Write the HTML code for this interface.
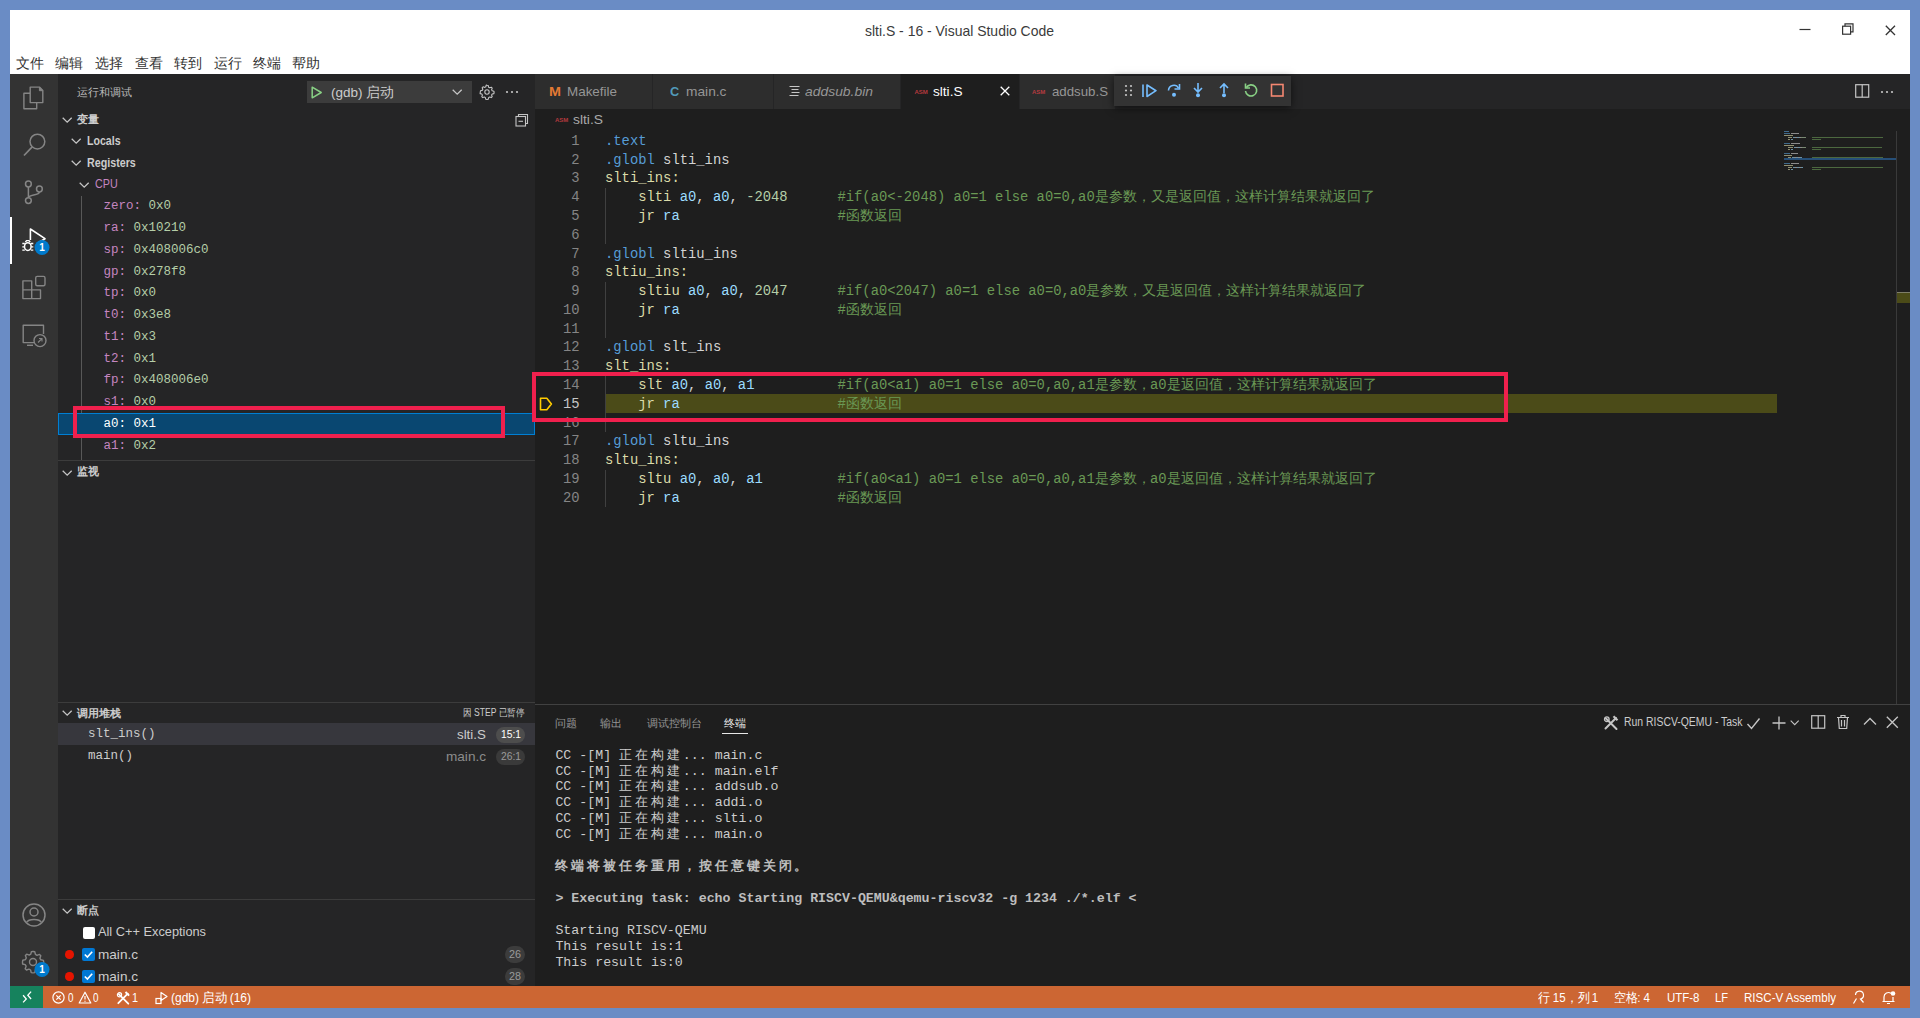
<!DOCTYPE html>
<html><head><meta charset="utf-8">
<style>
*{margin:0;padding:0;box-sizing:border-box}
html,body{width:1920px;height:1018px;overflow:hidden}
body{background:#6a8cc5;position:relative;font-family:"Liberation Sans",sans-serif}
.abs{position:absolute}
.t{position:absolute;white-space:pre;line-height:1;transform-origin:0 0}
svg{position:absolute;overflow:visible}
</style></head><body>

<div class="abs" style="left:10px;top:10px;width:1900px;height:64px;background:#ffffff;"></div>
<div class="abs" style="left:10px;top:74px;width:48px;height:912px;background:#333333;"></div>
<div class="abs" style="left:58px;top:74px;width:477px;height:912px;background:#252526;"></div>
<div class="abs" style="left:535px;top:74px;width:1375px;height:912px;background:#1e1e1e;"></div>
<div class="abs" style="left:535px;top:74px;width:1375px;height:35px;background:#252526;"></div>
<div class="abs" style="left:10px;top:986px;width:1900px;height:22px;background:#cc6633;"></div>
<div class="abs" style="left:10px;top:986px;width:33px;height:22px;background:#16825d;"></div>
<div class="t" style="transform:scaleX(0.9302);left:865.00px;top:22.85px;font-family:'Liberation Sans',sans-serif;font-size:15px;color:#3b3b3b;">slti.S - 16 - Visual Studio Code</div>
<div class="t" style="left:16.00px;top:55.60px;font-family:'Liberation Sans',sans-serif;font-size:14px;color:#333333;"><span style="display:inline-block;width:28.00px">文件</span></div>
<div class="t" style="left:55.00px;top:55.60px;font-family:'Liberation Sans',sans-serif;font-size:14px;color:#333333;"><span style="display:inline-block;width:28.00px">编辑</span></div>
<div class="t" style="left:95.00px;top:55.60px;font-family:'Liberation Sans',sans-serif;font-size:14px;color:#333333;"><span style="display:inline-block;width:28.00px">选择</span></div>
<div class="t" style="left:134.50px;top:55.60px;font-family:'Liberation Sans',sans-serif;font-size:14px;color:#333333;"><span style="display:inline-block;width:28.00px">查看</span></div>
<div class="t" style="left:174.00px;top:55.60px;font-family:'Liberation Sans',sans-serif;font-size:14px;color:#333333;"><span style="display:inline-block;width:28.00px">转到</span></div>
<div class="t" style="left:213.50px;top:55.60px;font-family:'Liberation Sans',sans-serif;font-size:14px;color:#333333;"><span style="display:inline-block;width:28.00px">运行</span></div>
<div class="t" style="left:252.50px;top:55.60px;font-family:'Liberation Sans',sans-serif;font-size:14px;color:#333333;"><span style="display:inline-block;width:28.00px">终端</span></div>
<div class="t" style="left:292.00px;top:55.60px;font-family:'Liberation Sans',sans-serif;font-size:14px;color:#333333;"><span style="display:inline-block;width:28.00px">帮助</span></div>
<svg style="left:1799px;top:24px;" width="14" height="12" viewBox="0 0 14 12"><line x1="0.5" y1="5.5" x2="11.5" y2="5.5" stroke="#333" stroke-width="1.2"/></svg>
<svg style="left:1842px;top:23px;" width="12" height="13" viewBox="0 0 12 13"><rect x="0.6" y="3.2" width="8" height="8" fill="none" stroke="#333" stroke-width="1.2"/><path d="M3 3.2V0.8h8v8H8.6" fill="none" stroke="#333" stroke-width="1.2"/></svg>
<svg style="left:1885px;top:25px;" width="11" height="11" viewBox="0 0 11 11"><path d="M0.8 0.8L10 10M10 0.8L0.8 10" stroke="#333" stroke-width="1.3"/></svg>
<svg style="left:22px;top:84px;" width="26" height="26" viewBox="0 0 26 26"><path d="M8.2 3.1h9.2l3.4 3.4v12.1H8.2z" fill="none" stroke="#858585" stroke-width="1.4" stroke-linejoin="round"/><path d="M17.4 3.1v3.6h3.4z" fill="#858585" stroke="#858585" stroke-width="1"/><path d="M8.2 9.2H1.9v15.5h12.8v-6.1" fill="none" stroke="#858585" stroke-width="1.4" stroke-linejoin="round"/></svg>
<svg style="left:22px;top:134px;" width="26" height="26" viewBox="0 0 26 26"><circle cx="15.4" cy="7.6" r="7.4" fill="none" stroke="#858585" stroke-width="1.5"/><path d="M10.2 12.8L2 21.5" stroke="#858585" stroke-width="1.7"/></svg>
<svg style="left:22px;top:180px;" width="26" height="26" viewBox="0 0 26 26"><circle cx="6.4" cy="4" r="2.9" fill="none" stroke="#858585" stroke-width="1.5"/><circle cx="6.4" cy="20.6" r="2.9" fill="none" stroke="#858585" stroke-width="1.5"/><circle cx="17.4" cy="9" r="2.9" fill="none" stroke="#858585" stroke-width="1.5"/><path d="M6.4 7v10.7 M17.4 12c0 3.5-11 2.5-11 5.7" fill="none" stroke="#858585" stroke-width="1.5"/></svg>
<div class="abs" style="left:10px;top:216.5px;width:2px;height:47.5px;background:#ffffff;"></div>
<svg style="left:20px;top:226px;" width="30" height="30" viewBox="0 0 30 30"><path d="M10.4 14V3L25 12.7L18 17" fill="none" stroke="#fff" stroke-width="1.6" stroke-linejoin="round"/><ellipse cx="7.8" cy="20.6" rx="3.3" ry="3.9" fill="none" stroke="#fff" stroke-width="1.5"/><path d="M2.3 17.5h2.5M2.3 20.8h2M2.3 24.2h2.5M10.8 17.5h2.5M11.3 20.8h2M10.8 24.2h2.5M5.3 16l1.3-1.3h2.4l1.3 1.3" stroke="#fff" stroke-width="1.3" fill="none"/></svg>
<svg style="left:34px;top:240px;" width="16" height="16" viewBox="0 0 16 16"><circle cx="8" cy="7.5" r="7.5" fill="#007acc"/><text x="8" y="11.3" font-family="Liberation Sans" font-size="10" font-weight="bold" fill="#fff" text-anchor="middle">1</text></svg>
<svg style="left:22px;top:276px;" width="26" height="26" viewBox="0 0 26 26"><path d="M0.9 4.9h8.8v9h8.8v8.7H0.9z M0.9 13.9h8.8v8.7" fill="none" stroke="#858585" stroke-width="1.4" stroke-linejoin="round"/><rect x="13.7" y="0.4" width="9.3" height="9.3" rx="1.5" fill="none" stroke="#858585" stroke-width="1.4"/></svg>
<svg style="left:22px;top:324px;" width="26" height="26" viewBox="0 0 26 26"><path d="M12 18.6H1.2V1.3h20.3v8.8" fill="none" stroke="#858585" stroke-width="1.4" stroke-linejoin="round"/><path d="M5 21.3h6" stroke="#858585" stroke-width="1.4"/><circle cx="18" cy="16.6" r="6" fill="none" stroke="#858585" stroke-width="1.4"/><path d="M16 18.5l4-4M17 14.5h3v3" fill="none" stroke="#858585" stroke-width="1.1"/></svg>
<svg style="left:21px;top:902px;" width="26" height="26" viewBox="0 0 26 26"><circle cx="13" cy="13" r="11" fill="none" stroke="#858585" stroke-width="1.5"/><circle cx="13" cy="10" r="4" fill="none" stroke="#858585" stroke-width="1.5"/><path d="M5.5 20.5c2-4 13-4 15 0" fill="none" stroke="#858585" stroke-width="1.5"/></svg>
<svg style="left:20px;top:949px;" width="26" height="26" viewBox="0 0 26 26"><path d="M13 2.5l1.8.3.6 2.6 1.6.9 2.5-.9 1.3 1.3-.9 2.5.9 1.6 2.6.6.3 1.8-.3 1.8-2.6.6-.9 1.6.9 2.5-1.3 1.3-2.5-.9-1.6.9-.6 2.6-1.8.3-1.8-.3-.6-2.6-1.6-.9-2.5.9-1.3-1.3.9-2.5-.9-1.6-2.6-.6L2.5 13l.3-1.8 2.6-.6.9-1.6-.9-2.5 1.3-1.3 2.5.9 1.6-.9.6-2.6z" fill="none" stroke="#858585" stroke-width="1.4" stroke-linejoin="round"/><circle cx="13" cy="13" r="3.5" fill="none" stroke="#858585" stroke-width="1.4"/></svg>
<svg style="left:34px;top:962px;" width="16" height="16" viewBox="0 0 16 16"><circle cx="8" cy="7.5" r="7.5" fill="#007acc"/><text x="8" y="11.3" font-family="Liberation Sans" font-size="10" font-weight="bold" fill="#fff" text-anchor="middle">1</text></svg>
<div class="t" style="left:77.20px;top:87.15px;font-family:'Liberation Sans',sans-serif;font-size:11px;color:#bbbbbb;"><span style="display:inline-block;width:55.00px">运行和调试</span></div>
<div class="abs" style="left:307px;top:81px;width:165px;height:21.5px;background:#3c3c3c;"></div>
<svg style="left:311px;top:86px;" width="12" height="13" viewBox="0 0 12 13"><path d="M1.2 1.2v10.6l9-5.3z" fill="none" stroke="#89d185" stroke-width="1.5" stroke-linejoin="round"/></svg>
<div class="t" style="left:331.00px;top:86.03px;font-family:'Liberation Sans',sans-serif;font-size:13.5px;color:#cccccc;">(gdb) <span style="display:inline-block;width:27.00px">启动</span></div>
<svg style="left:452px;top:88.5px;" width="11" height="7" viewBox="0 0 11 7"><path d="M0.7 0.7L5.2 5.2L9.7 0.7" fill="none" stroke="#c5c5c5" stroke-width="1.3"/></svg>
<svg style="left:479px;top:84px;" width="16" height="16" viewBox="0 0 16 16"><path d="M8 1.3l1.2.2.4 1.7 1 .6 1.7-.6.9.9-.6 1.7.6 1 1.7.4.2 1.2-.2 1.2-1.7.4-.6 1 .6 1.7-.9.9-1.7-.6-1 .6-.4 1.7-1.2.2-1.2-.2-.4-1.7-1-.6-1.7.6-.9-.9.6-1.7-.6-1-1.7-.4L1.3 8l.2-1.2 1.7-.4.6-1-.6-1.7.9-.9 1.7.6 1-.6.4-1.7z" fill="none" stroke="#c5c5c5" stroke-width="1.1" stroke-linejoin="round"/><circle cx="8" cy="8" r="2.2" fill="none" stroke="#c5c5c5" stroke-width="1.1"/></svg>
<svg style="left:505px;top:90px;" width="16" height="4" viewBox="0 0 16 4"><circle cx="2" cy="2" r="1.1" fill="#c5c5c5"/><circle cx="7" cy="2" r="1.1" fill="#c5c5c5"/><circle cx="12" cy="2" r="1.1" fill="#c5c5c5"/></svg>
<svg style="left:62px;top:116.5px;" width="11" height="7" viewBox="0 0 11 7"><path d="M0.7 0.7L5.2 5.2L9.7 0.7" fill="none" stroke="#c5c5c5" stroke-width="1.3"/></svg>
<div class="t" style="left:77.00px;top:114.45px;font-family:'Liberation Sans',sans-serif;font-size:11px;font-weight:bold;color:#cccccc;"><span style="display:inline-block;width:22.00px">变量</span></div>
<svg style="left:515px;top:113px;" width="14" height="14" viewBox="0 0 14 14"><path d="M3.5 3.5v-2h9v9h-2" fill="none" stroke="#c5c5c5" stroke-width="1.1"/><rect x="1" y="3.5" width="9.5" height="9.5" fill="none" stroke="#c5c5c5" stroke-width="1.1"/><path d="M3.5 8.3h4.5" stroke="#c5c5c5" stroke-width="1.1"/></svg>
<svg style="left:71px;top:138px;" width="11" height="7" viewBox="0 0 11 7"><path d="M0.7 0.7L5.2 5.2L9.7 0.7" fill="none" stroke="#c5c5c5" stroke-width="1.3"/></svg>
<div class="t" style="transform:scaleX(0.8158);left:87.40px;top:134.45px;font-family:'Liberation Sans',sans-serif;font-size:13px;font-weight:bold;color:#cccccc;">Locals</div>
<svg style="left:71px;top:159.8px;" width="11" height="7" viewBox="0 0 11 7"><path d="M0.7 0.7L5.2 5.2L9.7 0.7" fill="none" stroke="#c5c5c5" stroke-width="1.3"/></svg>
<div class="t" style="transform:scaleX(0.8236);left:87.40px;top:156.25px;font-family:'Liberation Sans',sans-serif;font-size:13px;font-weight:bold;color:#cccccc;">Registers</div>
<svg style="left:79px;top:181.5px;" width="11" height="7" viewBox="0 0 11 7"><path d="M0.7 0.7L5.2 5.2L9.7 0.7" fill="none" stroke="#c5c5c5" stroke-width="1.3"/></svg>
<div class="t" style="transform:scaleX(0.8269);left:95.30px;top:177.25px;font-family:'Liberation Sans',sans-serif;font-size:13px;color:#c586c0;">CPU</div>
<div class="abs" style="left:81px;top:196px;width:1px;height:264px;background:#585858;"></div>
<div class="abs" style="left:58px;top:413.3px;width:477px;height:21.4px;background:#094771;border:1px solid #007fd4"></div>
<div class="t" style="left:103.5px;top:200.24px;font-family:'Liberation Mono',monospace;font-size:12.5px;color:#c586c0">zero: <span style="color:#b5cea8">0x0</span></div>
<div class="t" style="left:103.5px;top:222.02px;font-family:'Liberation Mono',monospace;font-size:12.5px;color:#c586c0">ra: <span style="color:#b5cea8">0x10210</span></div>
<div class="t" style="left:103.5px;top:243.80px;font-family:'Liberation Mono',monospace;font-size:12.5px;color:#c586c0">sp: <span style="color:#b5cea8">0x408006c0</span></div>
<div class="t" style="left:103.5px;top:265.58px;font-family:'Liberation Mono',monospace;font-size:12.5px;color:#c586c0">gp: <span style="color:#b5cea8">0x278f8</span></div>
<div class="t" style="left:103.5px;top:287.36px;font-family:'Liberation Mono',monospace;font-size:12.5px;color:#c586c0">tp: <span style="color:#b5cea8">0x0</span></div>
<div class="t" style="left:103.5px;top:309.14px;font-family:'Liberation Mono',monospace;font-size:12.5px;color:#c586c0">t0: <span style="color:#b5cea8">0x3e8</span></div>
<div class="t" style="left:103.5px;top:330.92px;font-family:'Liberation Mono',monospace;font-size:12.5px;color:#c586c0">t1: <span style="color:#b5cea8">0x3</span></div>
<div class="t" style="left:103.5px;top:352.70px;font-family:'Liberation Mono',monospace;font-size:12.5px;color:#c586c0">t2: <span style="color:#b5cea8">0x1</span></div>
<div class="t" style="left:103.5px;top:374.48px;font-family:'Liberation Mono',monospace;font-size:12.5px;color:#c586c0">fp: <span style="color:#b5cea8">0x408006e0</span></div>
<div class="t" style="left:103.5px;top:396.26px;font-family:'Liberation Mono',monospace;font-size:12.5px;color:#c586c0">s1: <span style="color:#b5cea8">0x0</span></div>
<div class="t" style="left:103.5px;top:418.04px;font-family:'Liberation Mono',monospace;font-size:12.5px;color:#ffffff">a0: <span style="color:#ffffff">0x1</span></div>
<div class="t" style="left:103.5px;top:439.82px;font-family:'Liberation Mono',monospace;font-size:12.5px;color:#c586c0">a1: <span style="color:#b5cea8">0x2</span></div>
<div class="abs" style="left:58px;top:460px;width:477px;height:1px;background:#3c3c3c;"></div>
<svg style="left:62px;top:469.5px;" width="11" height="7" viewBox="0 0 11 7"><path d="M0.7 0.7L5.2 5.2L9.7 0.7" fill="none" stroke="#c5c5c5" stroke-width="1.3"/></svg>
<div class="t" style="left:77.00px;top:466.15px;font-family:'Liberation Sans',sans-serif;font-size:11px;font-weight:bold;color:#cccccc;"><span style="display:inline-block;width:22.00px">监视</span></div>
<div class="abs" style="left:58px;top:701.5px;width:477px;height:1px;background:#3c3c3c;"></div>
<svg style="left:62px;top:710px;" width="11" height="7" viewBox="0 0 11 7"><path d="M0.7 0.7L5.2 5.2L9.7 0.7" fill="none" stroke="#c5c5c5" stroke-width="1.3"/></svg>
<div class="t" style="left:77.00px;top:707.65px;font-family:'Liberation Sans',sans-serif;font-size:11px;font-weight:bold;color:#cccccc;"><span style="display:inline-block;width:44.00px">调用堆栈</span></div>
<div class="t" style="transform:scaleX(0.8573);left:462.50px;top:708.30px;font-family:'Liberation Sans',sans-serif;font-size:10px;color:#cccccc;"><span style="display:inline-block;width:10.00px">因</span> STEP <span style="display:inline-block;width:30.00px">已暂停</span></div>
<div class="abs" style="left:58px;top:723px;width:477px;height:22px;background:#37373d;"></div>
<div class="t" style="left:87.9px;top:728.30px;font-family:'Liberation Mono',monospace;font-size:12.5px;color:#cccccc">slt_ins()</div>
<div class="t" style="left:87.9px;top:750.30px;font-family:'Liberation Mono',monospace;font-size:12.5px;color:#cccccc">main()</div>
<div class="t" style="transform:scaleX(1.0223);left:456.50px;top:728.45px;font-family:'Liberation Sans',sans-serif;font-size:13px;color:#cccccc;">slti.S</div>
<div class="abs" style="left:496px;top:726.5px;width:28.5px;height:16px;background:#4d4d4d;border-radius:8px"></div>
<div class="t" style="transform:scaleX(0.9336);left:500.50px;top:729.15px;font-family:'Liberation Sans',sans-serif;font-size:11px;color:#ffffff;">15:1</div>
<div class="t" style="transform:scaleX(1.0445);left:446.00px;top:750.45px;font-family:'Liberation Sans',sans-serif;font-size:13px;color:#8c8c8c;">main.c</div>
<div class="abs" style="left:496px;top:748.5px;width:28.5px;height:16px;background:#3a3a3a;border-radius:8px"></div>
<div class="t" style="transform:scaleX(0.9336);left:500.50px;top:751.15px;font-family:'Liberation Sans',sans-serif;font-size:11px;color:#9a9a9a;">26:1</div>
<div class="abs" style="left:58px;top:899px;width:477px;height:1px;background:#3c3c3c;"></div>
<svg style="left:62px;top:908px;" width="11" height="7" viewBox="0 0 11 7"><path d="M0.7 0.7L5.2 5.2L9.7 0.7" fill="none" stroke="#c5c5c5" stroke-width="1.3"/></svg>
<div class="t" style="left:77.00px;top:905.15px;font-family:'Liberation Sans',sans-serif;font-size:11px;font-weight:bold;color:#cccccc;"><span style="display:inline-block;width:22.00px">断点</span></div>
<div class="abs" style="left:82.6px;top:926.5px;width:12px;height:12px;background:#ffffff;border-radius:2px"></div>
<div class="t" style="transform:scaleX(0.9832);left:98.00px;top:925.35px;font-family:'Liberation Sans',sans-serif;font-size:13px;color:#cccccc;">All C++ Exceptions</div>
<div class="abs" style="left:65px;top:950px;width:8.5px;height:8.5px;border-radius:50%;background:#e51400"></div>
<div class="abs" style="left:82.3px;top:948px;width:12.5px;height:12.5px;background:#0078d4;border-radius:2px"></div>
<svg style="left:82.3px;top:948px;" width="13" height="13" viewBox="0 0 13 13"><path d="M2.8 6.5l2.6 2.6 4.8-5.4" fill="none" stroke="#fff" stroke-width="1.6"/></svg>
<div class="t" style="transform:scaleX(1.0445);left:98.00px;top:947.75px;font-family:'Liberation Sans',sans-serif;font-size:13px;color:#cccccc;">main.c</div>
<div class="abs" style="left:65px;top:972px;width:8.5px;height:8.5px;border-radius:50%;background:#e51400"></div>
<div class="abs" style="left:82.3px;top:970px;width:12.5px;height:12.5px;background:#0078d4;border-radius:2px"></div>
<svg style="left:82.3px;top:970px;" width="13" height="13" viewBox="0 0 13 13"><path d="M2.8 6.5l2.6 2.6 4.8-5.4" fill="none" stroke="#fff" stroke-width="1.6"/></svg>
<div class="t" style="transform:scaleX(1.0445);left:98.00px;top:969.75px;font-family:'Liberation Sans',sans-serif;font-size:13px;color:#cccccc;">main.c</div>
<div class="abs" style="left:504.5px;top:945.6px;width:20px;height:17px;background:#3c3c3c;border-radius:9px"></div>
<div class="t" style="transform:scaleX(0.9796);left:508.50px;top:948.75px;font-family:'Liberation Sans',sans-serif;font-size:11px;color:#9a9a9a;">26</div>
<div class="abs" style="left:504.5px;top:967.6px;width:20px;height:17px;background:#3c3c3c;border-radius:9px"></div>
<div class="t" style="transform:scaleX(0.9796);left:508.50px;top:970.75px;font-family:'Liberation Sans',sans-serif;font-size:11px;color:#9a9a9a;">28</div>
<div class="abs" style="left:535px;top:74px;width:117.5px;height:34.5px;background:#2d2d2d;"></div>
<div class="abs" style="left:653px;top:74px;width:120.5px;height:34.5px;background:#2d2d2d;"></div>
<div class="abs" style="left:774px;top:74px;width:126.5px;height:34.5px;background:#2d2d2d;"></div>
<div class="abs" style="left:901px;top:74px;width:118px;height:34.5px;background:#1e1e1e;"></div>
<div class="abs" style="left:1019px;top:74px;width:96px;height:34.5px;background:#2d2d2d;"></div>
<div class="abs" style="left:652px;top:74px;width:1px;height:34.5px;background:#252526;"></div>
<div class="abs" style="left:773px;top:74px;width:1px;height:34.5px;background:#252526;"></div>
<div class="abs" style="left:900px;top:74px;width:1px;height:34.5px;background:#252526;"></div>
<div class="abs" style="left:1018.5px;top:74px;width:1px;height:34.5px;background:#252526;"></div>
<div class="t" style="transform:scaleX(1.1066);left:549.20px;top:85.05px;font-family:'Liberation Sans',sans-serif;font-size:13px;font-weight:bold;color:#e37933;">M</div>
<div class="t" style="transform:scaleX(0.9944);left:567.00px;top:85.23px;font-family:'Liberation Sans',sans-serif;font-size:13.5px;color:#969696;">Makefile</div>
<div class="t" style="transform:scaleX(0.9797);left:669.50px;top:85.15px;font-family:'Liberation Sans',sans-serif;font-size:13px;font-weight:bold;color:#519aba;">C</div>
<div class="t" style="transform:scaleX(1.0185);left:686.00px;top:85.23px;font-family:'Liberation Sans',sans-serif;font-size:13.5px;color:#969696;">main.c</div>
<svg style="left:789px;top:85px;" width="11" height="11" viewBox="0 0 11 11"><path d="M0.5 1.5h10M2.5 4.5h7M2.5 7.5h8M0.5 10.5h9" stroke="#c5c5c5" stroke-width="1.2"/></svg>
<div class="t" style="transform:scaleX(1.0293);left:805.00px;top:85.23px;font-family:'Liberation Sans',sans-serif;font-size:13.5px;font-style:italic;color:#969696;">addsub.bin</div>
<div class="t" style="left:914.5px;top:88.5px;font-family:'Liberation Sans',sans-serif;font-size:6px;font-weight:bold;color:#cc3e44;opacity:0.85">ASM</div>
<div class="t" style="transform:scaleX(1.0080);left:932.80px;top:85.23px;font-family:'Liberation Sans',sans-serif;font-size:13.5px;color:#ffffff;">slti.S</div>
<svg style="left:1000px;top:86px;" width="10" height="10" viewBox="0 0 10 10"><path d="M0.7 0.7l8.6 8.6M9.3 0.7L0.7 9.3" stroke="#ffffff" stroke-width="1.3"/></svg>
<div class="t" style="left:1032px;top:88.5px;font-family:'Liberation Sans',sans-serif;font-size:6px;font-weight:bold;color:#cc3e44;opacity:0.85">ASM</div>
<div class="t" style="transform:scaleX(0.9816);left:1052.00px;top:85.23px;font-family:'Liberation Sans',sans-serif;font-size:13.5px;color:#969696;">addsub.S</div>
<div class="abs" style="left:1114px;top:76.3px;width:177px;height:29.4px;background:#333333;box-shadow:0 2px 8px rgba(0,0,0,0.6)"></div>
<svg style="left:1124px;top:84px;" width="10" height="14" viewBox="0 0 10 14"><g fill="#c5c5c5"><circle cx="2" cy="2" r="1.1"/><circle cx="7" cy="2" r="1.1"/><circle cx="2" cy="6.5" r="1.1"/><circle cx="7" cy="6.5" r="1.1"/><circle cx="2" cy="11" r="1.1"/><circle cx="7" cy="11" r="1.1"/></g></svg>
<svg style="left:1141px;top:83px;" width="18" height="16" viewBox="0 0 18 16"><path d="M2 1.5v12.5" stroke="#75beff" stroke-width="1.6"/><path d="M6 2v11.5l9-5.8z" fill="none" stroke="#75beff" stroke-width="1.6" stroke-linejoin="round"/></svg>
<svg style="left:1166px;top:82px;" width="16" height="17" viewBox="0 0 16 17"><path d="M2.5 8.5a5.3 5.3 0 0 1 10-2.3" fill="none" stroke="#75beff" stroke-width="1.6"/><path d="M13.5 2v5h-5" fill="none" stroke="#75beff" stroke-width="1.6"/><circle cx="8" cy="12.8" r="2" fill="#75beff"/></svg>
<svg style="left:1191px;top:82px;" width="14" height="17" viewBox="0 0 14 17"><path d="M7 1v8.5M3 6l4 4 4-4" fill="none" stroke="#75beff" stroke-width="1.6"/><circle cx="7" cy="13.2" r="2" fill="#75beff"/></svg>
<svg style="left:1217px;top:82px;" width="14" height="17" viewBox="0 0 14 17"><path d="M7 11V2.5M3 6l4-4 4 4" fill="none" stroke="#75beff" stroke-width="1.6"/><circle cx="7" cy="13.2" r="2" fill="#75beff"/></svg>
<svg style="left:1243px;top:82px;" width="16" height="16" viewBox="0 0 16 16"><path d="M3.3 5.5a5.6 5.6 0 1 1-0.8 3.5" fill="none" stroke="#89d185" stroke-width="1.6"/><path d="M2.5 1.5v4.5h4.5" fill="none" stroke="#89d185" stroke-width="1.6"/></svg>
<svg style="left:1270px;top:83px;" width="15" height="15" viewBox="0 0 15 15"><rect x="1.5" y="1.5" width="11.5" height="11.5" fill="none" stroke="#f48771" stroke-width="1.6"/></svg>
<svg style="left:1855px;top:84px;" width="15" height="15" viewBox="0 0 15 15"><rect x="0.7" y="0.7" width="13" height="12.5" fill="none" stroke="#c5c5c5" stroke-width="1.2"/><path d="M7.2 0.7v12.5" stroke="#c5c5c5" stroke-width="1.2"/></svg>
<svg style="left:1880px;top:90px;" width="16" height="4" viewBox="0 0 16 4"><circle cx="2" cy="2" r="1.1" fill="#c5c5c5"/><circle cx="7" cy="2" r="1.1" fill="#c5c5c5"/><circle cx="12" cy="2" r="1.1" fill="#c5c5c5"/></svg>
<div class="t" style="left:555px;top:116.5px;font-family:'Liberation Sans',sans-serif;font-size:6px;font-weight:bold;color:#cc3e44;opacity:0.85">ASM</div>
<div class="t" style="transform:scaleX(1.0251);left:573.00px;top:113.03px;font-family:'Liberation Sans',sans-serif;font-size:13.5px;color:#a9a9a9;">slti.S</div>
<div class="abs" style="left:605px;top:394.36px;width:1172px;height:18.79px;background:#4b4b18;"></div>
<div class="abs" style="left:605px;top:187.67000000000002px;width:1px;height:19.09px;background:#404040;"></div>
<div class="abs" style="left:605px;top:206.46px;width:1px;height:19.09px;background:#404040;"></div>
<div class="abs" style="left:605px;top:225.25px;width:1px;height:19.09px;background:#404040;"></div>
<div class="abs" style="left:605px;top:281.62px;width:1px;height:19.09px;background:#404040;"></div>
<div class="abs" style="left:605px;top:300.40999999999997px;width:1px;height:19.09px;background:#404040;"></div>
<div class="abs" style="left:605px;top:319.2px;width:1px;height:19.09px;background:#404040;"></div>
<div class="abs" style="left:605px;top:375.57px;width:1px;height:19.09px;background:#404040;"></div>
<div class="abs" style="left:605px;top:394.36px;width:1px;height:19.09px;background:#404040;"></div>
<div class="abs" style="left:605px;top:413.15px;width:1px;height:19.09px;background:#404040;"></div>
<div class="abs" style="left:605px;top:469.52px;width:1px;height:19.09px;background:#404040;"></div>
<div class="abs" style="left:605px;top:488.31px;width:1px;height:19.09px;background:#404040;"></div>
<div class="t" style="left:540px;width:39.5px;text-align:right;top:134.79px;font-family:'Liberation Mono',monospace;font-size:13.83px;color:#858585">1</div>
<div class="t" style="left:605px;top:134.79px;font-family:'Liberation Mono',monospace;font-size:13.83px"><span style="color:#569cd6">.text</span></div>
<div class="t" style="left:540px;width:39.5px;text-align:right;top:153.58px;font-family:'Liberation Mono',monospace;font-size:13.83px;color:#858585">2</div>
<div class="t" style="left:605px;top:153.58px;font-family:'Liberation Mono',monospace;font-size:13.83px"><span style="color:#569cd6">.globl</span><span style="color:#d4d4d4"> slti_ins</span></div>
<div class="t" style="left:540px;width:39.5px;text-align:right;top:172.37px;font-family:'Liberation Mono',monospace;font-size:13.83px;color:#858585">3</div>
<div class="t" style="left:605px;top:172.37px;font-family:'Liberation Mono',monospace;font-size:13.83px"><span style="color:#dcdcaa">slti_ins:</span></div>
<div class="t" style="left:540px;width:39.5px;text-align:right;top:191.16px;font-family:'Liberation Mono',monospace;font-size:13.83px;color:#858585">4</div>
<div class="t" style="left:605px;top:191.16px;font-family:'Liberation Mono',monospace;font-size:13.83px"><span style="color:#dcdcaa">    slti</span><span style="color:#d4d4d4"> </span><span style="color:#9cdcfe">a0</span><span style="color:#d4d4d4">, </span><span style="color:#9cdcfe">a0</span><span style="color:#d4d4d4">, </span><span style="color:#b5cea8">-2048</span><span style="color:#d4d4d4">      </span><span style="color:#6a9955">#if(a0&lt;-2048) a0=1 else a0=0,a0<span style="display:inline-block;width:276.60px">是参数，又是返回值，这样计算结果就返回了</span></span></div>
<div class="t" style="left:540px;width:39.5px;text-align:right;top:209.95px;font-family:'Liberation Mono',monospace;font-size:13.83px;color:#858585">5</div>
<div class="t" style="left:605px;top:209.95px;font-family:'Liberation Mono',monospace;font-size:13.83px"><span style="color:#dcdcaa">    jr</span><span style="color:#d4d4d4"> </span><span style="color:#9cdcfe">ra</span><span style="color:#d4d4d4">                   </span><span style="color:#6a9955">#<span style="display:inline-block;width:55.32px">函数返回</span></span></div>
<div class="t" style="left:540px;width:39.5px;text-align:right;top:228.74px;font-family:'Liberation Mono',monospace;font-size:13.83px;color:#858585">6</div>
<div class="t" style="left:540px;width:39.5px;text-align:right;top:247.53px;font-family:'Liberation Mono',monospace;font-size:13.83px;color:#858585">7</div>
<div class="t" style="left:605px;top:247.53px;font-family:'Liberation Mono',monospace;font-size:13.83px"><span style="color:#569cd6">.globl</span><span style="color:#d4d4d4"> sltiu_ins</span></div>
<div class="t" style="left:540px;width:39.5px;text-align:right;top:266.32px;font-family:'Liberation Mono',monospace;font-size:13.83px;color:#858585">8</div>
<div class="t" style="left:605px;top:266.32px;font-family:'Liberation Mono',monospace;font-size:13.83px"><span style="color:#dcdcaa">sltiu_ins:</span></div>
<div class="t" style="left:540px;width:39.5px;text-align:right;top:285.11px;font-family:'Liberation Mono',monospace;font-size:13.83px;color:#858585">9</div>
<div class="t" style="left:605px;top:285.11px;font-family:'Liberation Mono',monospace;font-size:13.83px"><span style="color:#dcdcaa">    sltiu</span><span style="color:#d4d4d4"> </span><span style="color:#9cdcfe">a0</span><span style="color:#d4d4d4">, </span><span style="color:#9cdcfe">a0</span><span style="color:#d4d4d4">, </span><span style="color:#b5cea8">2047</span><span style="color:#d4d4d4">      </span><span style="color:#6a9955">#if(a0&lt;2047) a0=1 else a0=0,a0<span style="display:inline-block;width:276.60px">是参数，又是返回值，这样计算结果就返回了</span></span></div>
<div class="t" style="left:540px;width:39.5px;text-align:right;top:303.90px;font-family:'Liberation Mono',monospace;font-size:13.83px;color:#858585">10</div>
<div class="t" style="left:605px;top:303.90px;font-family:'Liberation Mono',monospace;font-size:13.83px"><span style="color:#dcdcaa">    jr</span><span style="color:#d4d4d4"> </span><span style="color:#9cdcfe">ra</span><span style="color:#d4d4d4">                   </span><span style="color:#6a9955">#<span style="display:inline-block;width:55.32px">函数返回</span></span></div>
<div class="t" style="left:540px;width:39.5px;text-align:right;top:322.69px;font-family:'Liberation Mono',monospace;font-size:13.83px;color:#858585">11</div>
<div class="t" style="left:540px;width:39.5px;text-align:right;top:341.48px;font-family:'Liberation Mono',monospace;font-size:13.83px;color:#858585">12</div>
<div class="t" style="left:605px;top:341.48px;font-family:'Liberation Mono',monospace;font-size:13.83px"><span style="color:#569cd6">.globl</span><span style="color:#d4d4d4"> slt_ins</span></div>
<div class="t" style="left:540px;width:39.5px;text-align:right;top:360.27px;font-family:'Liberation Mono',monospace;font-size:13.83px;color:#858585">13</div>
<div class="t" style="left:605px;top:360.27px;font-family:'Liberation Mono',monospace;font-size:13.83px"><span style="color:#dcdcaa">slt_ins:</span></div>
<div class="t" style="left:540px;width:39.5px;text-align:right;top:379.06px;font-family:'Liberation Mono',monospace;font-size:13.83px;color:#858585">14</div>
<div class="t" style="left:605px;top:379.06px;font-family:'Liberation Mono',monospace;font-size:13.83px"><span style="color:#dcdcaa">    slt</span><span style="color:#d4d4d4"> </span><span style="color:#9cdcfe">a0</span><span style="color:#d4d4d4">, </span><span style="color:#9cdcfe">a0</span><span style="color:#d4d4d4">, </span><span style="color:#9cdcfe">a1</span><span style="color:#d4d4d4">          </span><span style="color:#6a9955">#if(a0&lt;a1) a0=1 else a0=0,a0,a1<span style="display:inline-block;width:55.32px">是参数，</span>a0<span style="display:inline-block;width:207.45px">是返回值，这样计算结果就返回了</span></span></div>
<div class="t" style="left:540px;width:39.5px;text-align:right;top:397.85px;font-family:'Liberation Mono',monospace;font-size:13.83px;color:#c6c6c6">15</div>
<div class="t" style="left:605px;top:397.85px;font-family:'Liberation Mono',monospace;font-size:13.83px"><span style="color:#dcdcaa">    jr</span><span style="color:#d4d4d4"> </span><span style="color:#9cdcfe">ra</span><span style="color:#d4d4d4">                   </span><span style="color:#6a9955">#<span style="display:inline-block;width:55.32px">函数返回</span></span></div>
<div class="t" style="left:540px;width:39.5px;text-align:right;top:416.64px;font-family:'Liberation Mono',monospace;font-size:13.83px;color:#858585">16</div>
<div class="t" style="left:540px;width:39.5px;text-align:right;top:435.43px;font-family:'Liberation Mono',monospace;font-size:13.83px;color:#858585">17</div>
<div class="t" style="left:605px;top:435.43px;font-family:'Liberation Mono',monospace;font-size:13.83px"><span style="color:#569cd6">.globl</span><span style="color:#d4d4d4"> sltu_ins</span></div>
<div class="t" style="left:540px;width:39.5px;text-align:right;top:454.22px;font-family:'Liberation Mono',monospace;font-size:13.83px;color:#858585">18</div>
<div class="t" style="left:605px;top:454.22px;font-family:'Liberation Mono',monospace;font-size:13.83px"><span style="color:#dcdcaa">sltu_ins:</span></div>
<div class="t" style="left:540px;width:39.5px;text-align:right;top:473.01px;font-family:'Liberation Mono',monospace;font-size:13.83px;color:#858585">19</div>
<div class="t" style="left:605px;top:473.01px;font-family:'Liberation Mono',monospace;font-size:13.83px"><span style="color:#dcdcaa">    sltu</span><span style="color:#d4d4d4"> </span><span style="color:#9cdcfe">a0</span><span style="color:#d4d4d4">, </span><span style="color:#9cdcfe">a0</span><span style="color:#d4d4d4">, </span><span style="color:#9cdcfe">a1</span><span style="color:#d4d4d4">         </span><span style="color:#6a9955">#if(a0&lt;a1) a0=1 else a0=0,a0,a1<span style="display:inline-block;width:55.32px">是参数，</span>a0<span style="display:inline-block;width:207.45px">是返回值，这样计算结果就返回了</span></span></div>
<div class="t" style="left:540px;width:39.5px;text-align:right;top:491.80px;font-family:'Liberation Mono',monospace;font-size:13.83px;color:#858585">20</div>
<div class="t" style="left:605px;top:491.80px;font-family:'Liberation Mono',monospace;font-size:13.83px"><span style="color:#dcdcaa">    jr</span><span style="color:#d4d4d4"> </span><span style="color:#9cdcfe">ra</span><span style="color:#d4d4d4">                   </span><span style="color:#6a9955">#<span style="display:inline-block;width:55.32px">函数返回</span></span></div>
<svg style="left:538.5px;top:397px;" width="15" height="14" viewBox="0 0 15 14"><path d="M1.5 1.3h6.3l4.6 5.7-4.6 5.7H1.5z" fill="none" stroke="#ffcc00" stroke-width="1.6" stroke-linejoin="round"/></svg>
<div class="abs" style="left:1784.0px;top:130.5px;width:5.0px;height:1.8px;background:#569cd6;opacity:0.6"></div>
<div class="abs" style="left:1784.0px;top:132.5px;width:6.0px;height:1.8px;background:#569cd6;opacity:0.6"></div>
<div class="abs" style="left:1791.0px;top:132.5px;width:8.0px;height:1.8px;background:#d4d4d4;opacity:0.6"></div>
<div class="abs" style="left:1784.0px;top:134.5px;width:9.0px;height:1.8px;background:#dcdcaa;opacity:0.6"></div>
<div class="abs" style="left:1788.0px;top:136.5px;width:4.0px;height:1.8px;background:#dcdcaa;opacity:0.6"></div>
<div class="abs" style="left:1793.0px;top:136.5px;width:2.0px;height:1.8px;background:#9cdcfe;opacity:0.6"></div>
<div class="abs" style="left:1795.0px;top:136.5px;width:2.0px;height:1.8px;background:#d4d4d4;opacity:0.6"></div>
<div class="abs" style="left:1797.0px;top:136.5px;width:2.0px;height:1.8px;background:#9cdcfe;opacity:0.6"></div>
<div class="abs" style="left:1799.0px;top:136.5px;width:2.0px;height:1.8px;background:#d4d4d4;opacity:0.6"></div>
<div class="abs" style="left:1801.0px;top:136.5px;width:5.0px;height:1.8px;background:#b5cea8;opacity:0.6"></div>
<div class="abs" style="left:1812.0px;top:136.5px;width:71.0px;height:1.8px;background:#6a9955;opacity:0.6"></div>
<div class="abs" style="left:1788.0px;top:138.5px;width:2.0px;height:1.8px;background:#dcdcaa;opacity:0.6"></div>
<div class="abs" style="left:1791.0px;top:138.5px;width:2.0px;height:1.8px;background:#9cdcfe;opacity:0.6"></div>
<div class="abs" style="left:1812.0px;top:138.5px;width:9.0px;height:1.8px;background:#6a9955;opacity:0.6"></div>
<div class="abs" style="left:1784.0px;top:142.5px;width:6.0px;height:1.8px;background:#569cd6;opacity:0.6"></div>
<div class="abs" style="left:1791.0px;top:142.5px;width:9.0px;height:1.8px;background:#d4d4d4;opacity:0.6"></div>
<div class="abs" style="left:1784.0px;top:144.5px;width:10.0px;height:1.8px;background:#dcdcaa;opacity:0.6"></div>
<div class="abs" style="left:1788.0px;top:146.5px;width:5.0px;height:1.8px;background:#dcdcaa;opacity:0.6"></div>
<div class="abs" style="left:1794.0px;top:146.5px;width:2.0px;height:1.8px;background:#9cdcfe;opacity:0.6"></div>
<div class="abs" style="left:1796.0px;top:146.5px;width:2.0px;height:1.8px;background:#d4d4d4;opacity:0.6"></div>
<div class="abs" style="left:1798.0px;top:146.5px;width:2.0px;height:1.8px;background:#9cdcfe;opacity:0.6"></div>
<div class="abs" style="left:1800.0px;top:146.5px;width:2.0px;height:1.8px;background:#d4d4d4;opacity:0.6"></div>
<div class="abs" style="left:1802.0px;top:146.5px;width:4.0px;height:1.8px;background:#b5cea8;opacity:0.6"></div>
<div class="abs" style="left:1812.0px;top:146.5px;width:70.0px;height:1.8px;background:#6a9955;opacity:0.6"></div>
<div class="abs" style="left:1788.0px;top:148.5px;width:2.0px;height:1.8px;background:#dcdcaa;opacity:0.6"></div>
<div class="abs" style="left:1791.0px;top:148.5px;width:2.0px;height:1.8px;background:#9cdcfe;opacity:0.6"></div>
<div class="abs" style="left:1812.0px;top:148.5px;width:9.0px;height:1.8px;background:#6a9955;opacity:0.6"></div>
<div class="abs" style="left:1784.0px;top:152.5px;width:6.0px;height:1.8px;background:#569cd6;opacity:0.6"></div>
<div class="abs" style="left:1791.0px;top:152.5px;width:7.0px;height:1.8px;background:#d4d4d4;opacity:0.6"></div>
<div class="abs" style="left:1784.0px;top:154.5px;width:8.0px;height:1.8px;background:#dcdcaa;opacity:0.6"></div>
<div class="abs" style="left:1788.0px;top:156.5px;width:3.0px;height:1.8px;background:#dcdcaa;opacity:0.6"></div>
<div class="abs" style="left:1792.0px;top:156.5px;width:2.0px;height:1.8px;background:#9cdcfe;opacity:0.6"></div>
<div class="abs" style="left:1794.0px;top:156.5px;width:2.0px;height:1.8px;background:#d4d4d4;opacity:0.6"></div>
<div class="abs" style="left:1796.0px;top:156.5px;width:2.0px;height:1.8px;background:#9cdcfe;opacity:0.6"></div>
<div class="abs" style="left:1798.0px;top:156.5px;width:2.0px;height:1.8px;background:#d4d4d4;opacity:0.6"></div>
<div class="abs" style="left:1800.0px;top:156.5px;width:2.0px;height:1.8px;background:#9cdcfe;opacity:0.6"></div>
<div class="abs" style="left:1812.0px;top:156.5px;width:71.0px;height:1.8px;background:#6a9955;opacity:0.6"></div>
<div class="abs" style="left:1788.0px;top:158.5px;width:2.0px;height:1.8px;background:#dcdcaa;opacity:0.6"></div>
<div class="abs" style="left:1791.0px;top:158.5px;width:2.0px;height:1.8px;background:#9cdcfe;opacity:0.6"></div>
<div class="abs" style="left:1812.0px;top:158.5px;width:9.0px;height:1.8px;background:#6a9955;opacity:0.6"></div>
<div class="abs" style="left:1784.0px;top:162.5px;width:6.0px;height:1.8px;background:#569cd6;opacity:0.6"></div>
<div class="abs" style="left:1791.0px;top:162.5px;width:8.0px;height:1.8px;background:#d4d4d4;opacity:0.6"></div>
<div class="abs" style="left:1784.0px;top:164.5px;width:9.0px;height:1.8px;background:#dcdcaa;opacity:0.6"></div>
<div class="abs" style="left:1788.0px;top:166.5px;width:4.0px;height:1.8px;background:#dcdcaa;opacity:0.6"></div>
<div class="abs" style="left:1793.0px;top:166.5px;width:2.0px;height:1.8px;background:#9cdcfe;opacity:0.6"></div>
<div class="abs" style="left:1795.0px;top:166.5px;width:2.0px;height:1.8px;background:#d4d4d4;opacity:0.6"></div>
<div class="abs" style="left:1797.0px;top:166.5px;width:2.0px;height:1.8px;background:#9cdcfe;opacity:0.6"></div>
<div class="abs" style="left:1799.0px;top:166.5px;width:2.0px;height:1.8px;background:#d4d4d4;opacity:0.6"></div>
<div class="abs" style="left:1801.0px;top:166.5px;width:2.0px;height:1.8px;background:#9cdcfe;opacity:0.6"></div>
<div class="abs" style="left:1812.0px;top:166.5px;width:71.0px;height:1.8px;background:#6a9955;opacity:0.6"></div>
<div class="abs" style="left:1788.0px;top:168.5px;width:2.0px;height:1.8px;background:#dcdcaa;opacity:0.6"></div>
<div class="abs" style="left:1791.0px;top:168.5px;width:2.0px;height:1.8px;background:#9cdcfe;opacity:0.6"></div>
<div class="abs" style="left:1812.0px;top:168.5px;width:9.0px;height:1.8px;background:#6a9955;opacity:0.6"></div>
<div class="abs" style="left:1784px;top:158.2px;width:112px;height:1.6px;background:#264f78;"></div>
<div class="abs" style="left:1896px;top:131px;width:1px;height:573px;background:#3a3a3a;"></div>
<div class="abs" style="left:1897px;top:291.7px;width:13px;height:11.6px;background:#4b4b18;"></div>
<div class="abs" style="left:1897px;top:291.7px;width:13px;height:1.2px;background:#a0a0a0;opacity:0.6"></div>
<div class="abs" style="left:73px;top:405.6px;width:432.4px;height:32.7px;border:4.5px solid #f0204d"></div>
<div class="abs" style="left:532px;top:372px;width:976px;height:49.7px;border:4.5px solid #f0204d"></div>
<div class="abs" style="left:535px;top:704px;width:1375px;height:1px;background:#414141;"></div>
<div class="t" style="left:555.40px;top:718.15px;font-family:'Liberation Sans',sans-serif;font-size:11px;color:#969696;"><span style="display:inline-block;width:22.00px">问题</span></div>
<div class="t" style="left:600.00px;top:718.15px;font-family:'Liberation Sans',sans-serif;font-size:11px;color:#969696;"><span style="display:inline-block;width:22.00px">输出</span></div>
<div class="t" style="left:647.00px;top:718.15px;font-family:'Liberation Sans',sans-serif;font-size:11px;color:#969696;"><span style="display:inline-block;width:55.00px">调试控制台</span></div>
<div class="t" style="left:724.00px;top:718.15px;font-family:'Liberation Sans',sans-serif;font-size:11px;color:#e7e7e7;"><span style="display:inline-block;width:22.00px">终端</span></div>
<div class="abs" style="left:722px;top:732.5px;width:26px;height:1.2px;background:#e7e7e7;"></div>
<svg style="left:1603px;top:715px;" width="16" height="16" viewBox="0 0 16 16"><path d="M3 3.5L13.5 14M13 3L2.5 13.5" stroke="#c5c5c5" stroke-width="2" stroke-linecap="round"/><circle cx="3.8" cy="4.2" r="2.3" fill="none" stroke="#c5c5c5" stroke-width="1.3"/><path d="M10.5 1.2l4 4" stroke="#c5c5c5" stroke-width="2.2"/></svg>
<div class="t" style="transform:scaleX(0.8335);left:1623.50px;top:716.38px;font-family:'Liberation Sans',sans-serif;font-size:12.5px;color:#cccccc;">Run RISCV-QEMU - Task</div>
<svg style="left:1746px;top:717px;" width="15" height="13" viewBox="0 0 15 13"><path d="M1.5 7l4 4.5 8-10" fill="none" stroke="#c5c5c5" stroke-width="1.4"/></svg>
<svg style="left:1771px;top:715px;" width="16" height="16" viewBox="0 0 16 16"><path d="M8 1.5v13M1.5 8h13" stroke="#c5c5c5" stroke-width="1.3"/></svg>
<svg style="left:1790px;top:720px;" width="10" height="7" viewBox="0 0 10 7"><path d="M0.7 0.7l4 4 4-4" fill="none" stroke="#c5c5c5" stroke-width="1.1"/></svg>
<svg style="left:1811px;top:715px;" width="15" height="15" viewBox="0 0 15 15"><rect x="0.7" y="0.7" width="13" height="12.5" fill="none" stroke="#c5c5c5" stroke-width="1.2"/><path d="M7.2 0.7v12.5" stroke="#c5c5c5" stroke-width="1.2"/></svg>
<svg style="left:1836px;top:714px;" width="14" height="16" viewBox="0 0 14 16"><path d="M1 3.5h12M5 3.5V1.5h4v2M2.5 3.5l.8 11h7.4l.8-11M5.5 6v6.5M8.5 6v6.5" fill="none" stroke="#c5c5c5" stroke-width="1.2"/></svg>
<svg style="left:1863px;top:717px;" width="14" height="9" viewBox="0 0 14 9"><path d="M1 7.5l6-6 6 6" fill="none" stroke="#c5c5c5" stroke-width="1.3"/></svg>
<svg style="left:1886px;top:716px;" width="13" height="13" viewBox="0 0 13 13"><path d="M0.8 0.8l11 11M11.8 0.8l-11 11" stroke="#c5c5c5" stroke-width="1.3"/></svg>
<div class="t" style="left:555.4px;top:748.61px;font-family:'Liberation Mono',monospace;font-size:13.28px;color:#cccccc;">CC -[M] <span style="display:inline-block;width:15.94px">正</span><span style="display:inline-block;width:15.94px">在</span><span style="display:inline-block;width:15.94px">构</span><span style="display:inline-block;width:15.94px">建</span>... main.c</div>
<div class="t" style="left:555.4px;top:764.55px;font-family:'Liberation Mono',monospace;font-size:13.28px;color:#cccccc;">CC -[M] <span style="display:inline-block;width:15.94px">正</span><span style="display:inline-block;width:15.94px">在</span><span style="display:inline-block;width:15.94px">构</span><span style="display:inline-block;width:15.94px">建</span>... main.elf</div>
<div class="t" style="left:555.4px;top:780.49px;font-family:'Liberation Mono',monospace;font-size:13.28px;color:#cccccc;">CC -[M] <span style="display:inline-block;width:15.94px">正</span><span style="display:inline-block;width:15.94px">在</span><span style="display:inline-block;width:15.94px">构</span><span style="display:inline-block;width:15.94px">建</span>... addsub.o</div>
<div class="t" style="left:555.4px;top:796.43px;font-family:'Liberation Mono',monospace;font-size:13.28px;color:#cccccc;">CC -[M] <span style="display:inline-block;width:15.94px">正</span><span style="display:inline-block;width:15.94px">在</span><span style="display:inline-block;width:15.94px">构</span><span style="display:inline-block;width:15.94px">建</span>... addi.o</div>
<div class="t" style="left:555.4px;top:812.37px;font-family:'Liberation Mono',monospace;font-size:13.28px;color:#cccccc;">CC -[M] <span style="display:inline-block;width:15.94px">正</span><span style="display:inline-block;width:15.94px">在</span><span style="display:inline-block;width:15.94px">构</span><span style="display:inline-block;width:15.94px">建</span>... slti.o</div>
<div class="t" style="left:555.4px;top:828.31px;font-family:'Liberation Mono',monospace;font-size:13.28px;color:#cccccc;">CC -[M] <span style="display:inline-block;width:15.94px">正</span><span style="display:inline-block;width:15.94px">在</span><span style="display:inline-block;width:15.94px">构</span><span style="display:inline-block;width:15.94px">建</span>... main.o</div>
<div class="t" style="left:555.4px;top:860.19px;font-family:'Liberation Mono',monospace;font-size:13.28px;color:#bdbdbd;font-weight:bold;"><span style="display:inline-block;width:15.94px">终</span><span style="display:inline-block;width:15.94px">端</span><span style="display:inline-block;width:15.94px">将</span><span style="display:inline-block;width:15.94px">被</span><span style="display:inline-block;width:15.94px">任</span><span style="display:inline-block;width:15.94px">务</span><span style="display:inline-block;width:15.94px">重</span><span style="display:inline-block;width:15.94px">用</span><span style="display:inline-block;width:15.94px">，</span><span style="display:inline-block;width:15.94px">按</span><span style="display:inline-block;width:15.94px">任</span><span style="display:inline-block;width:15.94px">意</span><span style="display:inline-block;width:15.94px">键</span><span style="display:inline-block;width:15.94px">关</span><span style="display:inline-block;width:15.94px">闭</span><span style="display:inline-block;width:15.94px">。</span></div>
<div class="t" style="left:555.4px;top:892.07px;font-family:'Liberation Mono',monospace;font-size:13.28px;color:#bdbdbd;font-weight:bold;">&gt; Executing task: echo Starting RISCV-QEMU&amp;qemu-riscv32 -g 1234 ./*.elf &lt;</div>
<div class="t" style="left:555.4px;top:923.95px;font-family:'Liberation Mono',monospace;font-size:13.28px;color:#cccccc;">Starting RISCV-QEMU</div>
<div class="t" style="left:555.4px;top:939.89px;font-family:'Liberation Mono',monospace;font-size:13.28px;color:#cccccc;">This result is:1</div>
<div class="t" style="left:555.4px;top:955.83px;font-family:'Liberation Mono',monospace;font-size:13.28px;color:#cccccc;">This result is:0</div>
<svg style="left:21px;top:990px;" width="13" height="14" viewBox="0 0 13 14"><path d="M2.1 5.3L5.3 9L2.1 12.4M10.1 1.6L6.8 5.3L10.1 9" fill="none" stroke="#fff" stroke-width="1.3"/></svg>
<svg style="left:51.5px;top:991px;" width="13" height="13" viewBox="0 0 13 13"><circle cx="6.5" cy="6.5" r="5.6" fill="none" stroke="#fff" stroke-width="1.2"/><path d="M4.3 4.3l4.4 4.4M8.7 4.3l-4.4 4.4" stroke="#fff" stroke-width="1.2"/></svg>
<div class="t" style="transform:scaleX(0.7910);left:67.50px;top:992.38px;font-family:'Liberation Sans',sans-serif;font-size:12.5px;color:#ffffff;">0</div>
<svg style="left:77.5px;top:990.5px;" width="14" height="13" viewBox="0 0 14 13"><path d="M7 1.2l5.8 10.8H1.2z" fill="none" stroke="#fff" stroke-width="1.2" stroke-linejoin="round"/><path d="M7 5v3.5M7 9.8v1" stroke="#fff" stroke-width="1.2"/></svg>
<div class="t" style="transform:scaleX(0.7910);left:93.00px;top:992.38px;font-family:'Liberation Sans',sans-serif;font-size:12.5px;color:#ffffff;">0</div>
<svg style="left:116px;top:990.5px;" width="14" height="14" viewBox="0 0 14 14"><path d="M2.8 3.2L12.3 12.7M11.8 2.7L2.3 12.2" stroke="#fff" stroke-width="1.8" stroke-linecap="round"/><circle cx="3.5" cy="3.8" r="2.1" fill="none" stroke="#fff" stroke-width="1.2"/><path d="M9.5 1l3.6 3.6" stroke="#fff" stroke-width="2"/></svg>
<div class="t" style="transform:scaleX(0.8629);left:132.00px;top:992.38px;font-family:'Liberation Sans',sans-serif;font-size:12.5px;color:#ffffff;">1</div>
<svg style="left:154.5px;top:990px;" width="15" height="15" viewBox="0 0 15 15"><path d="M6 2.5v8l6-4z" fill="none" stroke="#fff" stroke-width="1.2" stroke-linejoin="round"/><rect x="1" y="8.5" width="5" height="5" fill="none" stroke="#fff" stroke-width="1.2"/></svg>
<div class="t" style="transform:scaleX(0.9597);left:171.00px;top:992.38px;font-family:'Liberation Sans',sans-serif;font-size:12.5px;color:#ffffff;">(gdb) <span style="display:inline-block;width:25.00px">启动</span> (16)</div>
<div class="t" style="transform:scaleX(0.9230);left:1537.70px;top:992.38px;font-family:'Liberation Sans',sans-serif;font-size:12.5px;color:#ffffff;"><span style="display:inline-block;width:12.50px">行</span> 15<span style="display:inline-block;width:25.00px">，列</span> 1</div>
<div class="t" style="transform:scaleX(0.9253);left:1614.00px;top:992.38px;font-family:'Liberation Sans',sans-serif;font-size:12.5px;color:#ffffff;"><span style="display:inline-block;width:25.00px">空格</span>: 4</div>
<div class="t" style="transform:scaleX(0.9175);left:1666.50px;top:992.38px;font-family:'Liberation Sans',sans-serif;font-size:12.5px;color:#ffffff;">UTF-8</div>
<div class="t" style="transform:scaleX(0.8908);left:1715.00px;top:992.38px;font-family:'Liberation Sans',sans-serif;font-size:12.5px;color:#ffffff;">LF</div>
<div class="t" style="transform:scaleX(0.9261);left:1744.00px;top:992.38px;font-family:'Liberation Sans',sans-serif;font-size:12.5px;color:#ffffff;">RISC-V Assembly</div>
<svg style="left:1851px;top:990px;" width="15" height="15" viewBox="0 0 15 15"><path d="M2.5 13.5l3-5M4.5 5a4 4 0 1 1 5 4l3 3.5" fill="none" stroke="#fff" stroke-width="1.2"/></svg>
<svg style="left:1881px;top:990px;" width="15" height="15" viewBox="0 0 15 15"><path d="M3 11.5V7a4.5 4.5 0 0 1 7-3.7M12 7v4.5M1.5 11.5h12M6 13.5h3" fill="none" stroke="#fff" stroke-width="1.2"/><circle cx="12" cy="3.5" r="2.3" fill="#fff"/></svg>
</body></html>
